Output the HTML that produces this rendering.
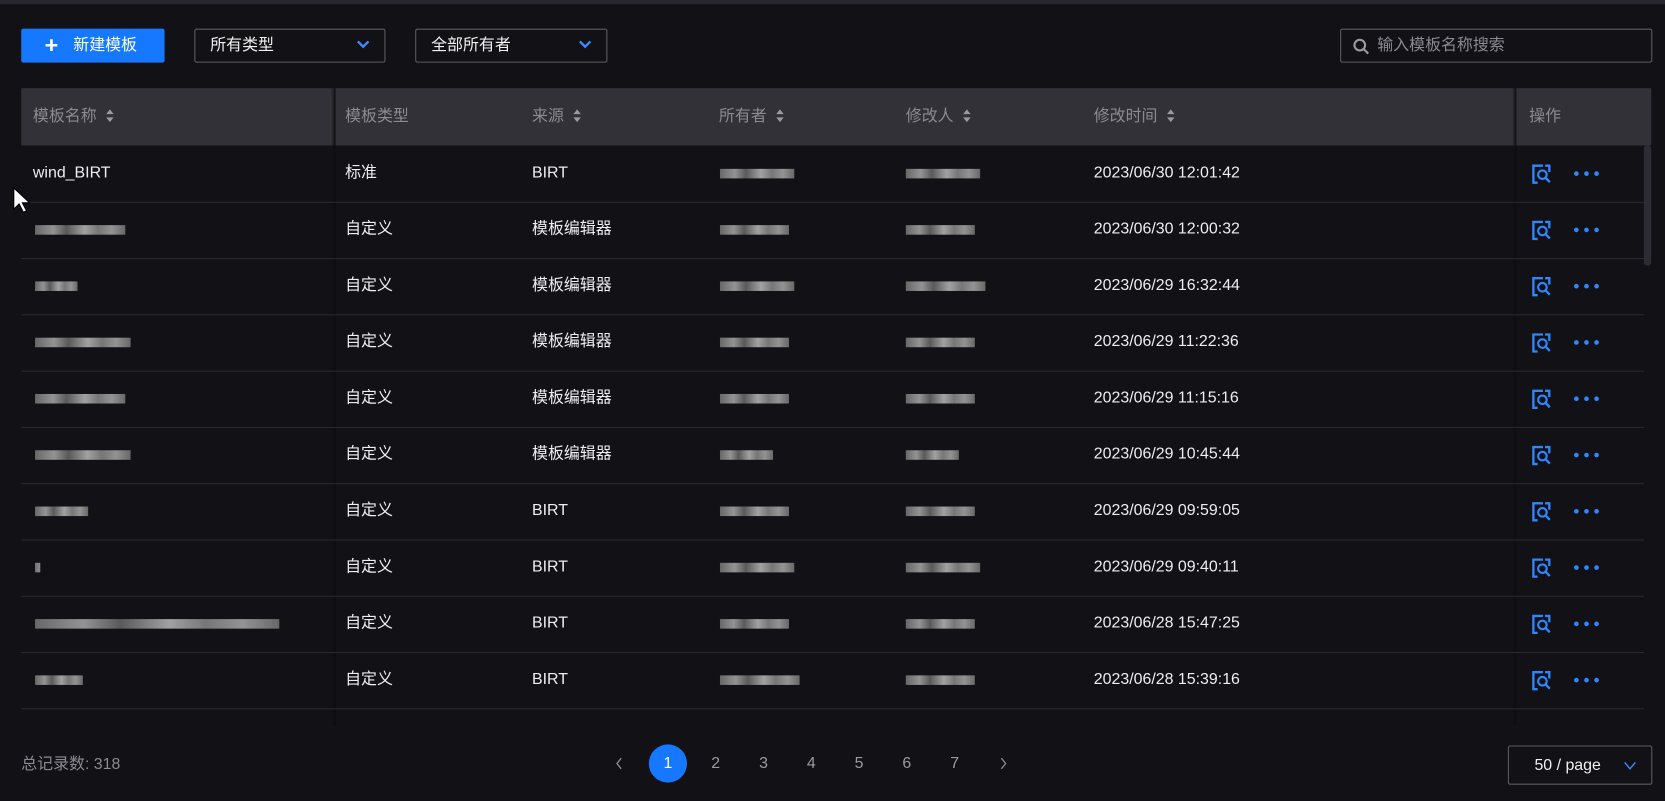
<!DOCTYPE html>
<html><head><meta charset="utf-8"><style>
html,body{margin:0;padding:0;width:1665px;height:801px;overflow:hidden;background:#111116;}
#w{position:absolute;left:0;top:0;width:1568px;height:754px;transform:scale(1.0619);transform-origin:0 0;background:#111116;font-family:"Liberation Sans","Noto Sans CJK SC",sans-serif;color:#e8e8ea;font-size:15px;}
.a{position:absolute;}
.top{left:0;top:0;width:1568px;height:4px;background:#26262c;}
.btn{left:20px;top:27px;width:135px;height:32px;background:#1677ff;border-radius:2px;color:#fff;line-height:32px;font-size:15px;}
.sel{top:27px;height:32px;border:1px solid #5c5c62;box-sizing:border-box;border-radius:2px;line-height:30px;padding-left:14px;font-size:15px;color:#f0f0f0;}
.chev{position:absolute;right:14px;top:9px;}
.hdr{left:20px;top:83px;width:1535px;height:54px;background:#313137;}
.h{top:83px;line-height:54px;color:#8a8a90;font-size:15px;}
.sort{display:inline-block;vertical-align:middle;margin-left:8px;width:9px;height:14px;position:relative;top:-1px}
.row{left:20px;width:1528px;height:1px;background:#2a2a30;}
.c{line-height:20px;font-size:15px;color:#eeeef0;}
.bl{height:9px;background:linear-gradient(90deg,#777 0,#aaa 20%,#666 35%,#bbb 55%,#888 70%,#aaa 85%,#777 100%);opacity:.85;}
.pg{top:701px;width:36px;height:36px;line-height:36px;text-align:center;color:#9a9aa0;}
</style></head><body><div id="w">
<div class="a top"></div>
<div class="a btn"><span style="position:absolute;left:22px;top:0;font-size:22px;font-weight:bold">+</span><span style="position:absolute;left:49px">新建模板</span></div>
<div class="a sel" style="left:183px;width:180px">所有类型<svg class="chev" width="12" height="10" viewBox="0 0 12 10"><path d="M1 2l5 5 5-5" stroke="#3d8bff" stroke-width="2.2" fill="none"/></svg></div>
<div class="a sel" style="left:391px;width:181px">全部所有者<svg class="chev" width="12" height="10" viewBox="0 0 12 10"><path d="M1 2l5 5 5-5" stroke="#3d8bff" stroke-width="2.2" fill="none"/></svg></div>
<div class="a sel" style="left:1262px;width:294px;color:#8a8a90;padding-left:34px">输入模板名称搜索<svg style="position:absolute;left:11px;top:8px" width="16" height="16" viewBox="0 0 16 16"><circle cx="6.5" cy="6.5" r="5" stroke="#9a9aa0" stroke-width="2" fill="none"/><path d="M10 10l4.5 4.5" stroke="#9a9aa0" stroke-width="2"/></svg></div>
<div class="a hdr"></div>
<div class="a" style="left:312px;top:83px;width:4px;height:600px;background:linear-gradient(90deg,transparent,#0d0d11)"></div>
<div class="a" style="left:1424px;top:83px;width:4px;height:600px;background:linear-gradient(90deg,transparent,#0d0d11)"></div>
<div class="a" style="left:1548px;top:137px;width:7px;height:113px;background:#2c2c32;border-radius:3px"></div>
<div id="heads"></div>
<div id="rows"></div>
<div class="a" style="left:20px;top:708px;color:#8a8a90;font-size:15px">总记录数: 318</div>
<svg class="a" style="left:579px;top:713px" width="8" height="12" viewBox="0 0 8 12"><path d="M6 1L2 6l4 5" stroke="#888" stroke-width="1.3" fill="none"/></svg>
<div class="a pg" style="left:611px;border-radius:18px;background:#1677ff;color:#fff">1</div>
<div class="a pg" style="left:656px">2</div><div class="a pg" style="left:701px">3</div><div class="a pg" style="left:746px">4</div><div class="a pg" style="left:791px">5</div><div class="a pg" style="left:836px">6</div><div class="a pg" style="left:881px">7</div>
<svg class="a" style="left:941px;top:713px" width="8" height="12" viewBox="0 0 8 12"><path d="M2 1l4 5-4 5" stroke="#888" stroke-width="1.3" fill="none"/></svg>
<div class="a sel" style="left:1420px;top:702px;width:136px;height:37px;line-height:35px;padding-left:24px">50 / page<svg class="chev" style="top:13px" width="12" height="10" viewBox="0 0 12 10"><path d="M1 2l5 6 5-6" stroke="#3d8bff" stroke-width="1.3" fill="none"/></svg></div>
<svg class="a" style="left:12px;top:176px" width="16" height="26" viewBox="0 0 16 26"><path d="M1 1v20l5-5 4 8 3-1.5-4-7.5h7z" fill="#fff" stroke="#000" stroke-width="1"/></svg>
</div>
<script>
var H=[["模板名称",31,1],["模板类型",325,0],["来源",501,1],["所有者",677,1],["修改人",853,1],["修改时间",1030,1],["操作",1440,0]];
var s='';H.forEach(function(h){s+='<div class="a h" style="left:'+h[1]+'px">'+h[0]+(h[2]?'<svg class="sort" viewBox="0 0 9 14"><path d="M4.5 1L8 5.5H1z M4.5 13L8 8.5H1z" fill="#9a9aa0"/></svg>':'')+'</div>';});
document.getElementById('heads').innerHTML=s;
var R=[["wind_BIRT","标准","BIRT","2023/06/30 12:01:42"],["","自定义","模板编辑器","2023/06/30 12:00:32"],["","自定义","模板编辑器","2023/06/29 16:32:44"],["","自定义","模板编辑器","2023/06/29 11:22:36"],["","自定义","模板编辑器","2023/06/29 11:15:16"],["","自定义","模板编辑器","2023/06/29 10:45:44"],["","自定义","BIRT","2023/06/29 09:59:05"],["","自定义","BIRT","2023/06/29 09:40:11"],["","自定义","BIRT","2023/06/28 15:47:25"],["","自定义","BIRT","2023/06/28 15:39:16"]];
var nw=[0,85,40,90,85,90,50,5,230,45],ow=[70,65,70,65,65,50,65,70,65,75],mw=[70,65,75,65,65,50,65,70,65,65];
var t='';R.forEach(function(r,i){var y=137+53*i,cy=y+16;
t+='<div class="a c" style="left:31px;top:'+cy+'px">'+r[0]+'</div>';
if(!r[0])t+='<div class="a bl" style="left:33px;top:'+(cy+6)+'px;width:'+nw[i]+'px"></div>';
t+='<div class="a c" style="left:325px;top:'+cy+'px">'+r[1]+'</div><div class="a c" style="left:501px;top:'+cy+'px">'+r[2]+'</div>';
t+='<div class="a bl" style="left:678px;top:'+(cy+6)+'px;width:'+ow[i]+'px"></div><div class="a bl" style="left:853px;top:'+(cy+6)+'px;width:'+mw[i]+'px"></div>';
t+='<div class="a c" style="left:1030px;top:'+cy+'px">'+r[3]+'</div>';
t+='<svg class="a" style="left:1442px;top:'+(cy+1)+'px" width="20" height="20" viewBox="0 0 20 20"><path d="M11 2H2v16h4" stroke="#2f86ff" stroke-width="2.2" fill="none"/><circle cx="10.5" cy="10.5" r="4" stroke="#2f86ff" stroke-width="2" fill="none"/><path d="M13.5 13.5l4 4" stroke="#2f86ff" stroke-width="2.2"/><path d="M13 2h4v6" stroke="#2f86ff" stroke-width="2.2" fill="none"/></svg>';
t+='<svg class="a" style="left:1482px;top:'+(cy+8)+'px" width="24" height="5" viewBox="0 0 24 5"><circle cx="2.5" cy="2.5" r="2.2" fill="#2f86ff"/><circle cx="12" cy="2.5" r="2.2" fill="#2f86ff"/><circle cx="21.5" cy="2.5" r="2.2" fill="#2f86ff"/></svg>';
t+='<div class="a row" style="top:'+(y+53)+'px"></div>';});
document.getElementById('rows').innerHTML=t;
</script>
</body></html>
